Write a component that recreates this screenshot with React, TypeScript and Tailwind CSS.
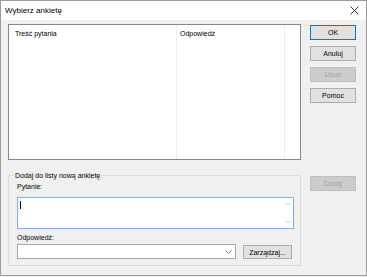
import React from "react";

const font = { fontFamily: '"Liberation Sans", Arial, sans-serif' };

function Btn({ label, disabled, primary, className = "" }: { label: string; disabled?: boolean; primary?: boolean; className?: string }) {
  const base = "flex items-center justify-center text-[7px] leading-none";
  const look = disabled
    ? "bg-[#cccccc] border border-[#bfbfbf] text-[#a3a3a3]"
    : primary
    ? "bg-[#e1e1e1] border border-[#0078d7] text-black"
    : "bg-[#e1e1e1] border border-[#adadad] text-black";
  return <div className={`${base} ${look} ${className}`}>{label}</div>;
}

export default function App() {
  return (
    <div className="w-[367px] h-[277px] bg-[#f0f0f0]" style={font}>
      <div className="w-[367px] h-[276px] border border-[#9a9a9a] flex flex-col">
        {/* title bar */}
        <div className="h-[19px] bg-white flex items-center justify-between pl-[4px] pr-[6px]">
          <span className="text-[8px] text-black leading-none">Wybierz ankietę</span>
          <svg width="9" height="9" viewBox="0 0 9 9" className="mr-[1px]">
            <path d="M0.5 0.5 L8.5 8.5 M8.5 0.5 L0.5 8.5" stroke="#222" strokeWidth="0.9" fill="none" />
          </svg>
        </div>
        {/* body */}
        <div className="flex-1 bg-[#f0f0f0] flex pl-[7px]">
          {/* left column */}
          <div className="w-[293px] flex flex-col pt-[4px]">
            {/* list */}
            <div className="h-[136px] bg-white border border-[#828790] flex">
              <div className="w-[168px] border-r border-[#e8eef5] pl-[6px] pt-[5px] text-[7px] leading-none text-black">Treść pytania</div>
              <div className="w-[108px] border-r border-[#e8eef5] pl-[3px] pt-[5px] text-[7px] leading-none text-black">Odpowiedź</div>
              <div className="flex-1" />
            </div>
            {/* group box */}
            <div className="relative mt-[15px] h-[91px] border border-[#dcdcdc] flex flex-col pl-[8px] pr-[6px]">
              <span className="absolute left-[5px] top-[-5px] bg-[#f0f0f0] px-[1px] text-[7px] leading-[10px] text-black">
                Dodaj do listy nową ankietę
              </span>
              <div className="pt-[6px] h-[16px] text-[7px] leading-[10px] text-black">Pytanie:</div>
              <div className="mt-[5px] h-[32px] bg-white border border-[#7eb4ea] flex">
                <div className="flex-1 pl-[2px] pt-[3px]">
                  <div className="w-[1px] h-[8px] bg-black" />
                </div>
                <div className="w-[11px] flex flex-col justify-between items-center py-[4px]">
                  <svg width="6" height="4" viewBox="0 0 6 4">
                    <path d="M0.5 3.5 L3 1 L5.5 3.5" stroke="#c0c0c0" strokeWidth="0.8" fill="none" />
                  </svg>
                  <svg width="6" height="4" viewBox="0 0 6 4">
                    <path d="M0.5 0.5 L3 3 L5.5 0.5" stroke="#c0c0c0" strokeWidth="0.8" fill="none" />
                  </svg>
                </div>
              </div>
              <div className="mt-[4px] h-[10px] text-[7px] leading-[10px] text-black">Odpowiedź:</div>
              <div className="mt-[1px] flex items-start">
                <div className="w-[219px] h-[15px] bg-white border border-[#a8a8a8] flex items-center justify-end pr-[3px]">
                  <svg width="7" height="4" viewBox="0 0 7 4">
                    <path d="M0.5 0.5 L3.5 3.3 L6.5 0.5" stroke="#606060" strokeWidth="0.8" fill="none" />
                  </svg>
                </div>
                <Btn label="Zarządzaj..." className="ml-[7px] mt-[1px] w-[49px] h-[14px]" />
              </div>
            </div>
          </div>
          {/* right column */}
          <div className="ml-[9px] w-[46px] flex flex-col pt-[5px]">
            <Btn label="OK" primary className="h-[15px]" />
            <Btn label="Anuluj" className="h-[15px] mt-[6px]" />
            <Btn label="Usuń" disabled className="h-[15px] mt-[6px]" />
            <Btn label="Pomoc" className="h-[15px] mt-[6px]" />
            <Btn label="Dodaj" disabled className="h-[15px] mt-[73px]" />
          </div>
        </div>
      </div>
    </div>
  );
}
